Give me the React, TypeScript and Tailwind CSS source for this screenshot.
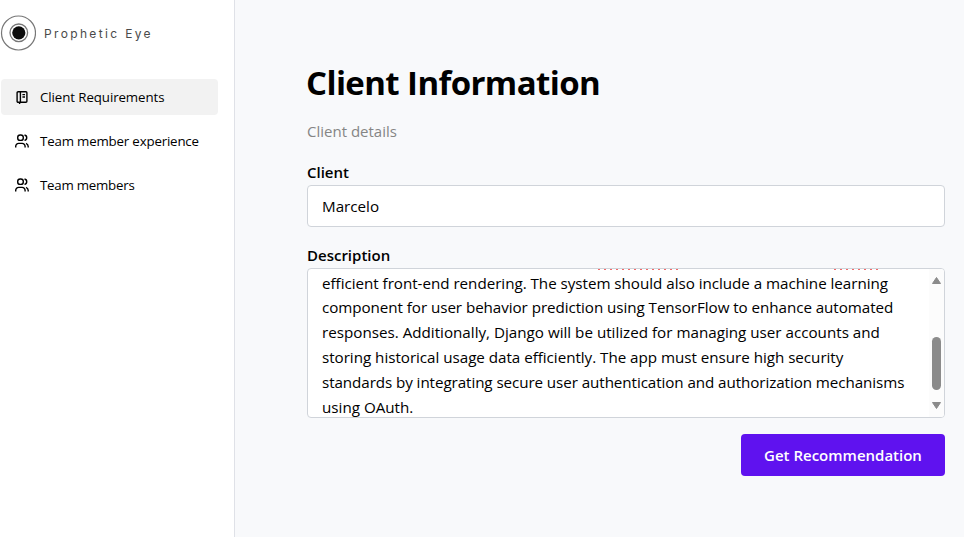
function Logo() {
  return (
    <div className="flex h-9 items-center">
      <svg className="h-9 w-9 shrink-0" viewBox="0 0 36 36" fill="none">
        <circle cx="18.5" cy="18" r="17" stroke="#777" strokeWidth="1.2" />
        <circle cx="18.8" cy="17.8" r="8.8" stroke="#777" strokeWidth="1.3" />
        <circle cx="18.8" cy="17.8" r="6.6" fill="#0b0b0b" />
      </svg>
      <span className="ml-2 pt-px font-['Inter',sans-serif] text-[12px] leading-none tracking-[2.35px] whitespace-nowrap text-[#4a4a4a]">
        Prophetic Eye
      </span>
    </div>
  );
}

function NotebookIcon() {
  return (
    <svg className="h-4 w-4 shrink-0" viewBox="0 0 16 16" fill="none" stroke="black" strokeWidth="1.4">
      <rect x="4.1" y="2.7" width="9.8" height="10.6" rx="1" />
      <path d="M7.4 2.7V13.3M9.4 5.6h2.6M9.4 8h2.6M6.6 13v2" />
    </svg>
  );
}

function UsersIcon() {
  return (
    <svg className="h-4 w-4 shrink-0" viewBox="0 0 16 16" fill="none" stroke="black" strokeWidth="1.4">
      <rect x="4.7" y="2" width="5.6" height="5.4" rx="2.5" />
      <path d="M2.7 14.6V13.4a3 3 0 0 1 3-3h3.4a3 3 0 0 1 3 3v1.2M11.5 2a2.75 2.75 0 0 1 0 5.4M13 10.4c1.4.5 2.2 1.6 2.2 3v1.2" />
    </svg>
  );
}

const navItems = [
  { label: "Client Requirements", active: true, tracking: "tracking-[-0.09px]" },
  { label: "Team member experience", active: false, tracking: "tracking-[-0.18px]" },
  { label: "Team members", active: false, tracking: "tracking-[-0.24px]" },
];

const lines = [
  { text: "efficient front-end rendering. The system should also include a machine learning", tracking: "tracking-[-0.03px]" },
  { text: "component for user behavior prediction using TensorFlow to enhance automated", tracking: "tracking-[-0.06px]" },
  { text: "responses. Additionally, Django will be utilized for managing user accounts and", tracking: "tracking-[0px]" },
  { text: "storing historical usage data efficiently. The app must ensure high security", tracking: "tracking-[-0.03px]" },
  { text: "standards by integrating secure user authentication and authorization mechanisms", tracking: "tracking-[-0.08px]" },
  { text: "using OAuth.", tracking: "tracking-[0px]" },
];

export default function App() {
  return (
    <div className="flex h-[537px] w-[964px] overflow-hidden bg-[#f8f9fb] font-['Open_Sans','Noto_Sans',sans-serif] text-black">
      <aside className="w-[235px] shrink-0 border-r border-[#dfe1e7] bg-white pt-[15px]">
        <Logo />
        <nav className="mt-7 ml-px flex w-[217px] flex-col gap-2">
          {navItems.map((item) => (
            <a
              key={item.label}
              className={`flex h-9 items-center gap-[11px] rounded pl-3 text-[13.3px] ${item.active ? "bg-[#f2f2f2]" : ""}`}
            >
              {item.active ? <NotebookIcon /> : <UsersIcon />}
              <span className={`pt-[2px] whitespace-nowrap ${item.tracking}`}>{item.label}</span>
            </a>
          ))}
        </nav>
      </aside>

      <main className="ml-[72px] w-[638px] pt-[58px]">
        <h1 className="-ml-px h-[50px] text-[33px] leading-[50px] font-bold tracking-[-0.6px] whitespace-nowrap">Client Information</h1>
        <p className="mt-[11px] h-6 text-[15px] leading-6 text-[#858585]">Client details</p>
        <label className="mt-[17px] block h-[25px] text-[15px] leading-6 font-semibold">Client</label>
        <div className="flex h-[42px] items-center rounded border border-[#d0d4da] bg-white px-[14px] text-[15.2px]">
          Marcelo
        </div>
        <label className="mt-4 block h-[25px] text-[15px] leading-6 font-semibold">Description</label>
        <div className="flex h-[150px] overflow-hidden rounded border border-[#d0d4da] bg-white">
          <div className="relative min-w-0 flex-1 pt-[1.6px] pl-[14px]">
            <div className="absolute top-0 left-[290px] h-px w-[82px] bg-[repeating-linear-gradient(90deg,#f06a6a_0_2px,transparent_2px_6px)]" />
            <div className="absolute top-0 left-[526px] h-px w-[45px] bg-[repeating-linear-gradient(90deg,#f06a6a_0_2px,transparent_2px_6px)]" />
            {lines.map((line) => (
              <div key={line.text} className={`h-[24.8px] text-[15.2px] leading-[24.4px] whitespace-nowrap ${line.tracking}`}>
                {line.text}
              </div>
            ))}
          </div>
          <div className="flex w-[15px] shrink-0 flex-col items-center bg-[#fcfcfc] pt-2">
            <svg className="h-[7px] w-[9px]" viewBox="0 0 9 7">
              <path d="M4.5 0.5L8.5 6.5H0.5Z" fill="#8b8b8b" stroke="#8b8b8b" strokeLinejoin="round" />
            </svg>
            <div className="mt-[53px] h-[53px] w-[9px] rounded-full bg-[#8b8b8b]" />
            <svg className="mt-3 h-[7px] w-[9px]" viewBox="0 0 9 7">
              <path d="M4.5 6.5L8.5 0.5H0.5Z" fill="#8b8b8b" stroke="#8b8b8b" strokeLinejoin="round" />
            </svg>
          </div>
        </div>
        <div className="mt-4 flex justify-end">
          <button className="h-[42px] w-[204px] rounded bg-[#5f12ef] text-[15px] font-semibold whitespace-nowrap text-white">
            Get Recommendation
          </button>
        </div>
      </main>
    </div>
  );
}
